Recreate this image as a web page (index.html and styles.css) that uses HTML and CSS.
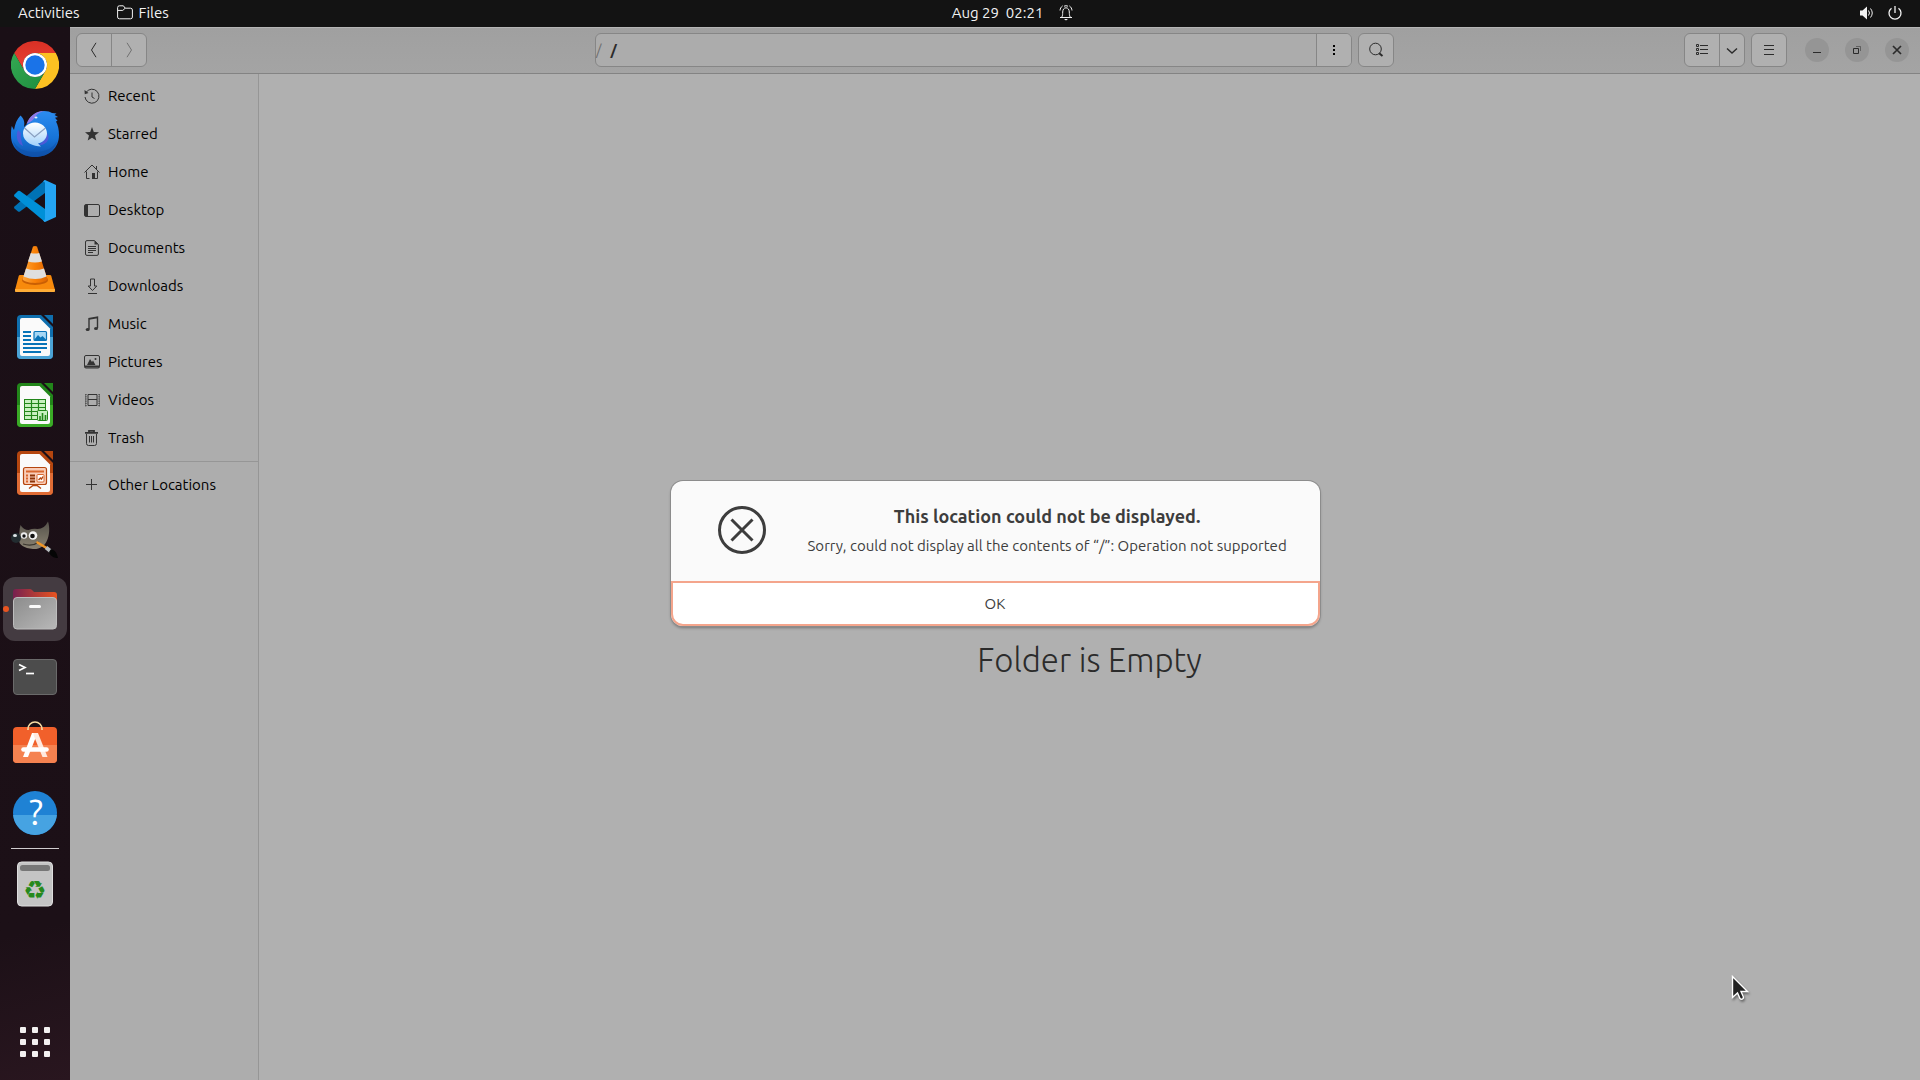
FILE: index.html
```html
<!DOCTYPE html>
<html lang="en">
<head>
<meta charset="utf-8">
<title>Files</title>
<link rel="stylesheet" href="styles.css">
</head>
<body>
<header class="topbar">
  <nav class="topbar-left">
    <button class="top-item">Activities</button>
    <button class="top-item"><svg width="16" height="16" viewBox="0 0 16 16" class="line"><path d="M.6 12V2.6Q.6.8 2.400.8h4l1.800 2.400h5.400q1.800 0 1.800 1.800v7q0 1.800-1.800 1.800H2.400Q.6 13.800.6 12zM1 5.400h4.800l2.400-2.200"/></svg>Files</button>
  </nav>
  <button class="clock"><time>Aug 29&nbsp; 02:21</time>
    <svg width="14" height="16" viewBox="0 0 14 16" class="line"><path d="M1 12.500h12M2.800 12c1-1.500.8-3 .9-5C3.800 4.500 5 2.800 7 2.800s3.200 1.700 3.300 4.200c.1 2 0 3.500.9 5M1 5.500C1.200 3.500 2 2 3.600.9M13 5.500C12.800 3.500 12 2 10.400.9M5 1.200Q7 .2 9 1.200"/><path d="M5 14h4l-2 1.500z" class="solid"/></svg>
  </button>
  <button class="status" aria-label="System menu">
    <svg width="16" height="16" viewBox="0 0 16 16" class="line"><path d="M1 5.500h2.500L8 1.500v13l-4.500-4H1z" class="solid"/><path d="M9.500 5.500q2 2.500 0 5M11.500 3.500q3.500 4.500 0 9"/></svg>
    <svg width="16" height="16" viewBox="0 0 16 16" class="line"><path d="M8 1v7M4.500 3.300a6 6 0 1 0 7 0" stroke-width="1.300"/></svg>
  </button>
</header>

<div class="desktop">
<nav class="dock" aria-label="Dock">
  <button class="app" aria-label="Chrome"><svg width="48" height="48" viewBox="0 0 48 48">
    <defs><linearGradient id="cr" x2="0" y2="1"><stop stop-color="#d93025"/><stop offset="1" stop-color="#ea4335"/></linearGradient><linearGradient id="cg" x1="0" y1="0" x2="1" y2="1"><stop stop-color="#34a853"/><stop offset="1" stop-color="#1e8e3e"/></linearGradient></defs>
    <path fill="url(#cr)" d="M3.200 12A24 24 0 0 1 44.800 12H24A12 12 0 0 0 13.600 30z"/><path fill="#fcc122" d="M44.800 12A24 24 0 0 1 24 48L34.400 30A12 12 0 0 0 24 12z"/><path fill="url(#cg)" d="M24 48A24 24 0 0 1 3.200 12L13.600 30A12 12 0 0 0 34.400 30z"/><circle cx="24" cy="24" r="12" fill="#fff"/><circle cx="24" cy="24" r="9.700" fill="#1a73e8"/></svg></button>
  <button class="app" aria-label="Thunderbird"><svg width="48" height="48" viewBox="0 0 48 48">
    <defs><linearGradient id="tb" x2="0" y2="1"><stop stop-color="#2c8cf0"/><stop offset=".6" stop-color="#1673d8"/><stop offset="1" stop-color="#0f52ac"/></linearGradient><linearGradient id="te" x2="0" y2="1"><stop stop-color="#fff"/><stop offset="1" stop-color="#9fd0fb"/></linearGradient></defs>
    <path fill="url(#tb)" d="M16 15C19 7 25 2 33 2c4 0 6 .8 8 2l4.500.5-2 1.500 3.500 2-3 .8 2.500 3-1.500.7C47 16 48 21 48 26c0 13-10 22-24 22S0 39 0 27c0-4 0-7 .8-10L3 21C4 15 6 10 9.500 6.500 13 10 14 13 13 18z"/>
    <path fill="#0d4da6" opacity=".5" d="M2 32c4 7 11 11 22 11s18-4 22-11c-2 9-10 16-22 16S4 41 2 32z"/>
    <path fill="#8f7ae8" d="M15.500 15C18 8 24 2 33 2c-5 1.500-8 3.500-9.500 7-2 3-5 4-8 6z"/>
    <path fill="#5a55d8" opacity=".8" d="M36 24c4 5 0 13-9 12q7-3 9-12zM7 21c-3 7 0 14 5 16q-3-8-2-13z"/>
    <path fill="url(#te)" d="M24 13.500c7 0 12 5 12 11 0 5-4 9-9 10l3 3c-7 0-18-4-18-13 0-6 5-11 12-11z"/><path d="M13.500 19l10 9 11-9" fill="none" stroke="#8a9fc0" stroke-width="1.200"/><ellipse cx="25" cy="8.500" rx="1.500" ry="1" fill="#dff0ff"/></svg></button>
  <button class="app" aria-label="Visual Studio Code"><svg width="48" height="48" viewBox="0 0 48 48">
    <path fill="#0072b5" d="M34 3v13L9 34.500q-1 .5-2 0L3.500 31.500q-1-1 0-2z"/><path fill="#0090d8" d="M3.500 17.500l3.500-3.500q1-.7 2 0l25 18v13L3.500 19.500q-1-1 0-2z"/><path fill="#24a5f3" d="M34 3l11 5v32l-11 5c-1-.3-1.500-1-2-2 1 .6 2 0 2-1.500v-35c0-1.500-1-2-2-1.500.5-1 1-1.600 2-2z"/></svg></button>
  <button class="app" aria-label="VLC"><svg width="48" height="48" viewBox="0 0 48 48">
    <defs><linearGradient id="vl"><stop stop-color="#ffa63a"/><stop offset=".5" stop-color="#f98108"/><stop offset="1" stop-color="#dc6503"/></linearGradient></defs>
    <path fill="#f88a0c" d="M9 30h30q1 0 1.300 1l3.700 14q0 2-1.500 2h-37Q4 47 4 45L7.700 31q.3-1 1.300-1z"/><path fill="#ffad37" d="M4 44h40v2q0 1-1 1H5q-1 0-1-1z"/><ellipse cx="24" cy="35" rx="13" ry="5" fill="#c95f04"/><path fill="url(#vl)" d="M22 1.500q2-1 4 0l10.500 33c-4 4.500-21 4.500-25 0z"/><path fill="#dfdfdf" d="M19.800 8q4 1 8.400 0l2.800 8.500q-7 2-14 0zM15 23.500q9 3 18 0l2.500 8q-11 5-23 0z"/></svg></button>
  <button class="app" aria-label="LibreOffice Writer"><svg width="48" height="48" viewBox="0 0 48 48">
    <path fill="#0f6fae" d="M10 2h20l12 12v28q0 4-4 4H10q-4 0-4-4V6q0-4 4-4z"/><path fill="#4ba3d5" d="M6 24h36v18q0 4-4 4H10q-4 0-4-4z"/><path fill="#fafafa" d="M11 5h17.500L39 15.500V41q0 2-2 2H11q-2 0-2-2V7q0-2 2-2z"/><path fill="#0f6fae" d="M33 2h9v9z"/><path d="M12 19h8M12 23h8M12 27h8M12 31h24M12 35h24M12 39h18" stroke="#0874b8" stroke-width="2"/><rect x="23" y="18.500" width="12.500" height="9" rx="1" fill="#a5d7f5" stroke="#0874b8" stroke-width="1.200"/><path fill="#0874b8" d="M23 27l4-5 2.500 2.500L31.500 23l4 4z"/></svg></button>
  <button class="app" aria-label="LibreOffice Calc"><svg width="48" height="48" viewBox="0 0 48 48">
    <path fill="#22861a" d="M10 2h20l12 12v28q0 4-4 4H10q-4 0-4-4V6q0-4 4-4z"/><path fill="#3aab26" d="M6 24h36v18q0 4-4 4H10q-4 0-4-4z"/><path fill="#fafafa" d="M11 5h17.500L39 15.500V41q0 2-2 2H11q-2 0-2-2V7q0-2 2-2z"/><path fill="#22861a" d="M33 2h9v9z"/><rect x="13.500" y="18.500" width="21" height="20" fill="#c8f0c0" stroke="#22861a"/><path d="M13 22.500h22M13 26.500h22M13 30.500h22M13 34.500h22M20.500 18v21M27.500 18v21" stroke="#22861a" stroke-width="1.200"/><rect x="26.500" y="29.500" width="10" height="10" rx="1" fill="#c8f0c0" stroke="#22861a"/><path d="M29 39v-4M31.500 39v-7M34.500 39v-5" stroke="#22861a" stroke-width="1.600"/></svg></button>
  <button class="app" aria-label="LibreOffice Impress"><svg width="48" height="48" viewBox="0 0 48 48">
    <path fill="#b5460f" d="M10 2h20l12 12v28q0 4-4 4H10q-4 0-4-4V6q0-4 4-4z"/><path fill="#e06c35" d="M6 24h36v18q0 4-4 4H10q-4 0-4-4z"/><path fill="#fafafa" d="M11 5h17.500L39 15.500V41q0 2-2 2H11q-2 0-2-2V7q0-2 2-2z"/><path fill="#b5460f" d="M33 2h9v9z"/><rect x="12.500" y="18.500" width="23" height="17" rx="2" fill="#f9cdb8" stroke="#b5460f" stroke-width="1.200"/><path d="M15 22.500h18" stroke="#d9672f" stroke-width="2"/><path d="M19 26.500h5M19 29.500h5M19 32.500h5" stroke="#8e3408" stroke-width="2"/><path d="M15 26.500h2M15 29.500h2M15 32.500h2" stroke="#d9672f" stroke-width="2"/><rect x="26" y="25.500" width="7" height="7.500" rx="1" fill="#fff" stroke="#d9672f"/><path d="M27.500 31l2-2 1 1 1.500-2.500M18 39.500l4-3h4l4 3" fill="none" stroke="#b5460f" stroke-width="1.400"/></svg></button>
  <button class="app" aria-label="GIMP"><svg width="48" height="48" viewBox="0 0 48 48">
    <defs><linearGradient id="gm" x2="0" y2="1"><stop stop-color="#55524a"/><stop offset="1" stop-color="#8a8272"/></linearGradient></defs>
    <path fill="url(#gm)" d="M9.500 8q3 5 8 5 5-2 9-1 7 0 10.500-7.500c2 6 1.500 14-1 19-2.500 6-8 9-14 8.500C13 31 8 28 8 23 8.500 18 8 13 9.500 8z"/><circle cx="5" cy="21" r="5" fill="#222c30"/><ellipse cx="4" cy="18.500" rx="2" ry="1.500" fill="#dfe5e8"/><circle cx="13" cy="18.500" r="3.200" fill="#eee"/><circle cx="22" cy="18.500" r="4.300" fill="#f4f4f4"/><circle cx="13" cy="19" r="1.700" fill="#111"/><circle cx="21.500" cy="19" r="2.300" fill="#111"/><path d="M12 27q9 3 16-2" fill="none" stroke="#3a362e" stroke-width="1.200"/><path d="M26.500 25.500l9 5.500" stroke="#f09628" stroke-width="2.600" stroke-linecap="round"/><path d="M35 30.500l5 4" stroke="#b9bdc0" stroke-width="4"/><path fill="#050505" d="M40 32c4 1 6 4 7 9-4 0-8-2-9-6z"/></svg></button>
  <button class="app running" aria-label="Files"><svg width="48" height="48" viewBox="0 0 48 48">
    <defs><linearGradient id="fo"><stop stop-color="#77204f"/><stop offset="1" stop-color="#e95420"/></linearGradient><linearGradient id="ff" x2="1" y2="1"><stop stop-color="#8c8c8c"/><stop offset="1" stop-color="#b8b8b8"/></linearGradient></defs>
    <path fill="url(#fo)" d="M5 4h14q1 0 2 1l2 2h20q3 0 3 3v14H2V7q0-3 3-3z"/><rect x="2.500" y="12.500" width="43" height="31.500" rx="3.500" fill="url(#ff)" stroke="#bdbdbd"/><rect x="18" y="20" width="12" height="3" rx="1.500" fill="#fafafa"/></svg></button>
  <button class="app" aria-label="Terminal"><svg width="48" height="48" viewBox="0 0 48 48"><rect x="2.500" y="6.500" width="43" height="35" rx="3.500" fill="#4c4c4c" stroke="#6a6a6a"/><path d="M8 11.500l6 3-6 3" fill="none" stroke="#fff" stroke-width="1.700"/><path d="M15 20.500h8" stroke="#fff" stroke-width="1.700"/></svg></button>
  <button class="app" aria-label="Ubuntu Software"><svg width="48" height="48" viewBox="0 0 48 48"><rect x="2" y="6" width="44" height="36" rx="4" fill="#f1602b"/><path fill="#f58250" d="M2 24h44v14q0 4-4 4H6q-4 0-4-4z"/><path d="M17 9V8a7 7 0 0 1 14 0v1" fill="none" stroke="#f8dca4" stroke-width="1.600"/><path fill="#fff" d="M21 12h5.500L17 36h-5z"/><path fill="#ffe9df" d="M22.500 12H27l9.500 24h-5L22.500 14z"/><path d="M12.500 28.500h23" stroke="#fff" stroke-width="4.600" stroke-linecap="round"/></svg></button>
  <button class="app" aria-label="Help"><svg width="48" height="48" viewBox="0 0 48 48"><circle cx="24" cy="24" r="22" fill="#1f82d4"/><path fill="#46a3e2" d="M2.100 26h43.800a22 22 0 0 1-43.800 0z"/><text x="25" y="36" class="help-mark">?</text></svg></button>
  <hr class="dock-line">
  <button class="app" aria-label="Trash"><svg width="48" height="48" viewBox="0 0 48 48"><rect x="6.500" y="2" width="35" height="44" rx="4" fill="#c4c4c4" stroke="#dedede"/><rect x="9" y="5" width="30" height="6" rx="2.500" fill="#777"/><text x="24" y="39" class="recycle">♻</text></svg></button>
  <button class="app show-apps" aria-label="Show Applications"><svg width="30" height="30" viewBox="0 0 30 30" fill="#f2f0f0"><rect width="6" height="6" rx="1"/><rect x="12" width="6" height="6" rx="1"/><rect x="24" width="6" height="6" rx="1"/><rect y="12" width="6" height="6" rx="1"/><rect x="12" y="12" width="6" height="6" rx="1"/><rect x="24" y="12" width="6" height="6" rx="1"/><rect y="24" width="6" height="6" rx="1"/><rect x="12" y="24" width="6" height="6" rx="1"/><rect x="24" y="24" width="6" height="6" rx="1"/></svg></button>
</nav>

<main class="window">
  <header class="headerbar">
    <div class="group">
      <button class="tool" aria-label="Back"><svg width="16" height="16" viewBox="0 0 16 16" class="line"><path d="M10 .8L5.500 8l4.500 7.200"/></svg></button>
      <button class="tool dim" aria-label="Forward"><svg width="16" height="16" viewBox="0 0 16 16" class="line"><path d="M6 .8L10.500 8 6 15.200"/></svg></button>
    </div>
    <div class="location">
      <div class="group path">
        <div class="crumbs"><span class="sep">/</span><a href="#" class="crumb">/</a></div>
        <button class="tool" aria-label="Path menu"><svg width="16" height="16" viewBox="0 0 16 16"><path d="M7 3h2v2H7zM7 7h2v2H7zM7 11h2v2H7z"/></svg></button>
      </div>
      <div class="group"><button class="tool" aria-label="Search"><svg width="16" height="16" viewBox="0 0 16 16" class="line"><circle cx="7.500" cy="7" r="5.800"/><path d="M11.200 11.200L14.500 14" stroke-width="2"/></svg></button></div>
    </div>
    <div class="controls">
      <div class="group">
        <button class="tool" aria-label="List view"><svg width="16" height="16" viewBox="0 0 16 16" class="line"><path d="M2.500 2.500h2v2h-2zM2.500 6.500h2v2h-2zM2.500 10.500h2v2h-2zM6 3.500h8M6 7.500h8M6 11.500h8"/></svg></button>
        <button class="tool narrow" aria-label="View options"><svg width="12" height="16" viewBox="0 0 12 16" class="line"><path d="M1 6.500l5 4.500 5-4.500" stroke-width="1.400"/></svg></button>
      </div>
      <div class="group"><button class="tool" aria-label="Menu"><svg width="16" height="16" viewBox="0 0 16 16" class="line"><path d="M3 3.500h10M3 7.500h10M3 12.500h10"/></svg></button></div>
      <div class="wm">
        <button class="round" aria-label="Minimize"><svg width="16" height="16" viewBox="0 0 16 16" class="line"><path d="M4 10.500h8"/></svg></button>
        <button class="round" aria-label="Restore"><svg width="16" height="16" viewBox="0 0 16 16" class="line"><path d="M4.500 6.500h5v5h-5z"/><path d="M7 4.500h4.500V9" opacity=".5"/></svg></button>
        <button class="round" aria-label="Close"><svg width="16" height="16" viewBox="0 0 16 16" class="line"><path d="M4 4l8 8M12 4l-8 8" stroke-width="1.700"/></svg></button>
      </div>
    </div>
  </header>
  <div class="content">
    <aside class="sidebar">
      <a href="#" class="place"><svg width="16" height="16" viewBox="0 0 16 16" class="line"><path d="M2 4.500a7 7 0 1 1-1 4.500M8 4.500V9l2.500 1.500"/><path d="M.5 2l.3 4.200L4.500 5z" class="solid"/></svg>Recent</a>
      <a href="#" class="place"><svg width="16" height="16" viewBox="0 0 16 16"><path d="M8 1l1.800 4.900 5.200.3-4 3.300 1.300 5-4.300-2.800-4.300 2.800 1.300-5-4-3.300 5.200-.3z"/></svg>Starred</a>
      <a href="#" class="place"><svg width="16" height="16" viewBox="0 0 16 16" class="line"><path d="M.5 8.500L8 1l7.500 7.500M2.500 7.500v7h3M13.500 7.500v7H11M12.500 2v3"/><path d="M8 9h3v6H8z" class="solid"/></svg>Home</a>
      <a href="#" class="place"><svg width="16" height="16" viewBox="0 0 16 16" class="line"><rect x=".500" y="2.500" width="15" height="12" rx="1.500"/><path d="M1 3h3v11H1z" class="solid"/></svg>Desktop</a>
      <a href="#" class="place"><svg width="16" height="16" viewBox="0 0 16 16" class="line"><path d="M3 .6h7.500L14.400 4.500V14q0 1.400-1.400 1.400H3Q1.500 15.400 1.500 14V2Q1.500.6 3 .6zM4 6.500h8M4 8.500h8M4 10.500h8M4 12.500h5"/><path d="M10.500.5v4h4z" class="solid"/></svg>Documents</a>
      <a href="#" class="place"><svg width="16" height="16" viewBox="0 0 16 16" class="line"><path d="M6.500 1h4v7h2.300l-4.300 4.500L4.200 8h2.300zM4 15.500h9"/></svg>Downloads</a>
      <a href="#" class="place"><svg width="16" height="16" viewBox="0 0 16 16" class="line"><path d="M5 13V2.500l8.500-1.500V12M5 3l8.500-1.500" stroke-width="1.400"/><ellipse cx="3.700" cy="13.500" rx="2" ry="1.600" class="solid"/><ellipse cx="12" cy="12.500" rx="2" ry="1.600" class="solid"/></svg>Music</a>
      <a href="#" class="place"><svg width="16" height="16" viewBox="0 0 16 16" class="line"><rect x=".500" y="1.500" width="15" height="12.500" rx="1.500"/><path d="M.5 12.500h15" stroke-width="2"/><path d="M3 11l3-6 2 3 1-1.500L11.500 11z" class="solid"/><circle cx="11.500" cy="5" r="1" class="solid"/></svg>Pictures</a>
      <a href="#" class="place"><svg width="16" height="16" viewBox="0 0 16 16" class="line"><path d="M4 2.500h9v11H4zM4 7.500h9"/><path d="M2 2v12.500M15 2v12.500" stroke-dasharray="1.200 1"/><path d="M1.500 2v12.500M15.500 2v12.500" opacity=".4"/></svg>Videos</a>
      <a href="#" class="place"><svg width="16" height="16" viewBox="0 0 16 16" class="line"><path d="M1 2.800h13M5 2.500V.8h5v1.700" stroke-width="1.800"/><path d="M2.500 4v9.500q0 2 2 2h6q2 0 2-2V4M5.500 6v6.500M7.500 6v6.500M9.500 6v6.500"/></svg>Trash</a>
      <hr class="side-line">
      <a href="#" class="place"><svg width="16" height="16" viewBox="0 0 16 16" class="line"><path d="M2 7.500h11M7.500 2v11"/></svg>Other Locations</a>
    </aside>
    <section class="folder"><h1>Folder is Empty</h1></section>
  </div>

  <div class="overlay">
    <div class="alert" role="alertdialog" aria-labelledby="alert-title" aria-describedby="alert-text">
      <div class="alert-body">
        <svg width="48" height="48" viewBox="0 0 48 48" class="line"><circle cx="24" cy="24" r="22.500" stroke-width="3"/><path d="M13.500 13.500l21 21M34.500 13.500l-21 21" stroke-width="3"/></svg>
        <div class="alert-copy">
          <h2 id="alert-title">This location could not be displayed.</h2>
          <p id="alert-text">Sorry, could not display all the contents of “/”: Operation not supported</p>
        </div>
      </div>
      <button class="ok">OK</button>
    </div>
  </div>
</main>
</div>
<svg class="pointer" width="18" height="26" viewBox="0 0 18 26"><path d="M1.500 1.500v21l5-4.500 2.500 5.500q1.500 1.500 3 0 .8-1 0-2.500L10 16.500h6.500z" fill="#222" stroke="#fff" stroke-width="1.400"/></svg>
</body>
</html>
```
FILE: styles.css
```css
* { box-sizing: border-box; }
body {
  margin: 0;
  min-height: 100vh;
  display: flex;
  flex-direction: column;
  font-family: Ubuntu, "Noto Sans", sans-serif;
  font-size: 15px;
  line-height: 20px;
  color: #000;
  background: #b0b0b0;
}
button { margin: 0; padding: 0; border: 0; background: none; color: inherit; font: inherit; }
a { color: inherit; text-decoration: none; }
svg { display: block; flex: none; }
.line { fill: none; stroke: currentColor; }
.solid { fill: currentColor; stroke: none; }

/* Top panel */
.topbar {
  display: grid;
  grid-template-columns: 1fr auto 1fr;
  align-items: center;
  height: 27px;
  padding: 0 17px 1px 18px;
  background: #131313;
  color: #f2f2f2;
}
.topbar-left { display: flex; gap: 37px; }
.top-item { display: flex; align-items: center; gap: 6px; }
.clock { display: flex; align-items: center; gap: 16px; padding-left: 104px; }
.status { display: flex; gap: 12px; justify-self: end; }

.desktop { flex: 1; display: flex; }

/* Dock */
.dock {
  width: 70px;
  padding: 4px 0;
  display: flex;
  flex-direction: column;
  background: linear-gradient(165deg, #1a0f16 0, #1c1017 85%, #29161f 100%);
}
.app {
  position: relative;
  height: 68px;
  display: flex;
  align-items: center;
  justify-content: center;
}
.running { height: 64px; margin: 2px 3px; border-radius: 12px; background: #443b41; }
.running::before {
  content: "";
  position: absolute;
  left: 0;
  top: 29px;
  width: 6px;
  height: 6px;
  border-radius: 50%;
  background: #e95420;
}
.dock-line { width: 48px; height: 1px; margin: 1px auto; border: 0; background: #d0cdcf; }
.show-apps { margin-top: auto; }
.help-mark { font: 36px Ubuntu, "Noto Sans", sans-serif; text-anchor: middle; fill: #fff; }
.recycle { font: 26px "DejaVu Sans", sans-serif; text-anchor: middle; fill: #26891c; }

/* Window */
.window { position: relative; flex: 1; display: flex; flex-direction: column; }
.headerbar {
  display: grid;
  grid-template-columns: 1fr minmax(0, 799px) 1fr;
  align-items: center;
  height: 47px;
  padding: 0 7px 1px 6px;
  background: linear-gradient(#a0a0a0, #a4a4a4);
  border-top: 1px solid #b5b5b5;
  border-bottom: 1px solid #838383;
  color: #2b2b2b;
}
.group {
  display: flex;
  justify-self: start;
  height: 34px;
  border: 1px solid #868686;
  border-radius: 6px;
  background: #b0b0b0;
}
.tool { width: 34px; display: flex; align-items: center; justify-content: center; }
.tool + .tool, .crumbs + .tool { width: 35px; border-left: 1px solid #868686; }
.tool + .narrow { width: 25px; }
.dim { color: #707070; }
.location { display: flex; gap: 6px; }
.path { flex: 1; background: #acacac; }
.path .tool { background: #b0b0b0; border-radius: 0 5px 5px 0; }
.crumbs { flex: 1; display: flex; align-items: center; gap: 9px; }
.sep { color: #707070; }
.crumb { font-weight: 700; }
.controls { display: flex; align-items: center; gap: 6px; justify-self: end; margin-right: 4px; }
.wm { display: flex; gap: 16px; margin-left: 12px; }
.round {
  width: 24px;
  height: 24px;
  border-radius: 50%;
  display: flex;
  align-items: center;
  justify-content: center;
  background: #959595;
}

.content { flex: 1; display: flex; }
.sidebar { width: 189px; padding-top: 3px; background: #adadad; border-right: 1px solid #969696; }
.place { display: flex; align-items: center; gap: 8px; height: 38px; padding-left: 14px; }
.place svg { color: #333; fill: #333; }
.place .line { fill: none; }
.side-line { height: 1px; margin: 4px 0; border: 0; background: #969696; }
.folder { flex: 1; display: flex; align-items: center; justify-content: center; padding-top: 166px; }
.folder h1 { margin: 0; font: 300 33px/40px Ubuntu, "Open Sans", sans-serif; color: #2b2b2b; }

/* Error dialog */
.overlay { position: absolute; inset: 0; display: flex; align-items: center; justify-content: center; }
.alert {
  width: 649px;
  max-width: 100%;
  border-radius: 12px;
  background: #fafafa;
  color: #3d3d3d;
  box-shadow: 0 0 0 1px #8c8c8c, 0 2px 3px #0005;
}
.alert-body { display: flex; align-items: flex-start; gap: 42px; padding: 24px 36px 25px 47px; }
.alert-body svg { margin-top: 1px; }
.alert-copy { flex: 1; text-align: center; white-space: nowrap; }
.alert h2 { margin: 0 0 9px; font-size: 18px; line-height: 22px; }
.alert p { margin: 0; line-height: 20px; }
.ok {
  display: block;
  width: 100%;
  height: 45px;
  border: 2px solid #f4a58c;
  border-radius: 0 0 12px 12px;
  background: #fff;
}

.pointer { position: absolute; left: 1731px; top: 975px; filter: drop-shadow(1px 2px 1px #0006); }
```
